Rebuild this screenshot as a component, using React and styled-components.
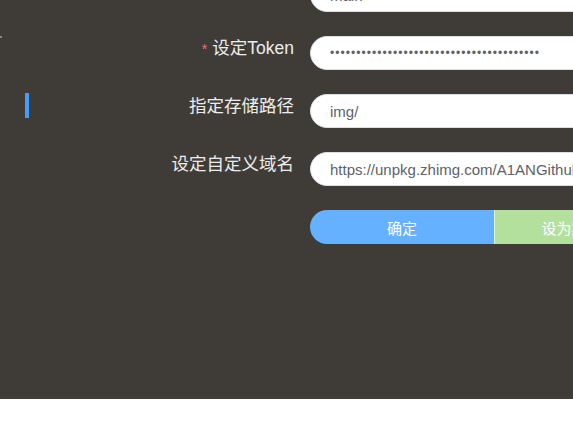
import React from 'react';
import styled, { createGlobalStyle } from 'styled-components';

const GlobalStyle = createGlobalStyle`
  html, body {
    margin: 0;
    padding: 0;
    background: #ffffff;
    overflow: hidden;
  }
`;

const fields = [
  { label: '设定分支', value: 'main', required: false },
  { label: '设定Token', value: '•'.repeat(40), required: true, secret: true },
  { label: '指定存储路径', value: 'img/', required: false },
  { label: '设定自定义域名', value: 'https://unpkg.zhimg.com/A1ANGithub/images', required: false },
];

export default function App() {
  return (
    <>
      <GlobalStyle />
      <Panel>
        <Sidebar>
          <Caret />
          <Indicator />
        </Sidebar>
        <Form>
          {fields.map((f) => (
            <Row key={f.label}>
              <Label>
                {f.required && <Star>*</Star>}
                {f.label}
              </Label>
              <Input readOnly value={f.value} $secret={f.secret} />
            </Row>
          ))}
          <Row>
            <span />
            <ButtonGroup>
              <Button $kind="primary">确定</Button>
              <Button $kind="success">设为默认图床</Button>
            </ButtonGroup>
          </Row>
        </Form>
      </Panel>
    </>
  );
}

const Panel = styled.div`
  display: flex;
  height: 399px;
  background: #3f3c37;
  box-shadow: 0 3px 10px rgba(0, 0, 0, 0.22);
  overflow: hidden;
  font-family: "Helvetica Neue", "Liberation Sans", "Noto Sans CJK SC", sans-serif;
`;

const Sidebar = styled.div`
  width: 34px;
  flex-shrink: 0;
  padding-top: 36px;
  box-sizing: border-box;
  display: flex;
  flex-direction: column;
`;

const Caret = styled.div`
  width: 2px;
  height: 2px;
  background: #8a8782;
`;

const Indicator = styled.div`
  width: 4px;
  height: 25px;
  margin: 55px 0 0 25px;
  background: #409eff;
`;

const Form = styled.div`
  margin-top: -22px;
  display: flex;
  flex-direction: column;
  gap: 24px;
`;

const Row = styled.div`
  display: grid;
  grid-template-columns: 260px 420px;
  column-gap: 16px;
  align-items: start;
  height: 34px;
`;

const Label = styled.label`
  text-align: right;
  font-size: 17.5px;
  line-height: 24px;
  color: #ececec;
  white-space: nowrap;
`;

const Star = styled.span`
  color: #f56c6c;
  font-size: 14px;
  margin-right: 5px;
`;

const Input = styled.input`
  box-sizing: border-box;
  width: 100%;
  height: 34px;
  padding: 0 19px;
  border: 1px solid #dcdfe6;
  border-radius: 17px;
  background: #ffffff;
  color: #606266;
  font-family: "Helvetica Neue", "Liberation Sans", sans-serif;
  font-size: ${(p) => (p.$secret ? '12px' : '15px')};
  letter-spacing: ${(p) => (p.$secret ? '1.05px' : '0')};
  outline: none;
`;

const ButtonGroup = styled.div`
  display: flex;
  height: 34px;
`;

const Button = styled.button`
  width: 184px;
  flex-shrink: 0;
  height: 34px;
  border: none;
  border-left: ${(p) => (p.$kind === 'success' ? '1px solid rgba(255,255,255,0.6)' : 'none')};
  border-radius: ${(p) => (p.$kind === 'primary' ? '17px 0 0 17px' : '0 17px 17px 0')};
  background: ${(p) => (p.$kind === 'primary' ? '#66b1ff' : '#b3e19d')};
  color: #ffffff;
  font-family: "Helvetica Neue", "Liberation Sans", "Noto Sans CJK SC", sans-serif;
  font-size: 15px;
  cursor: pointer;
`;
